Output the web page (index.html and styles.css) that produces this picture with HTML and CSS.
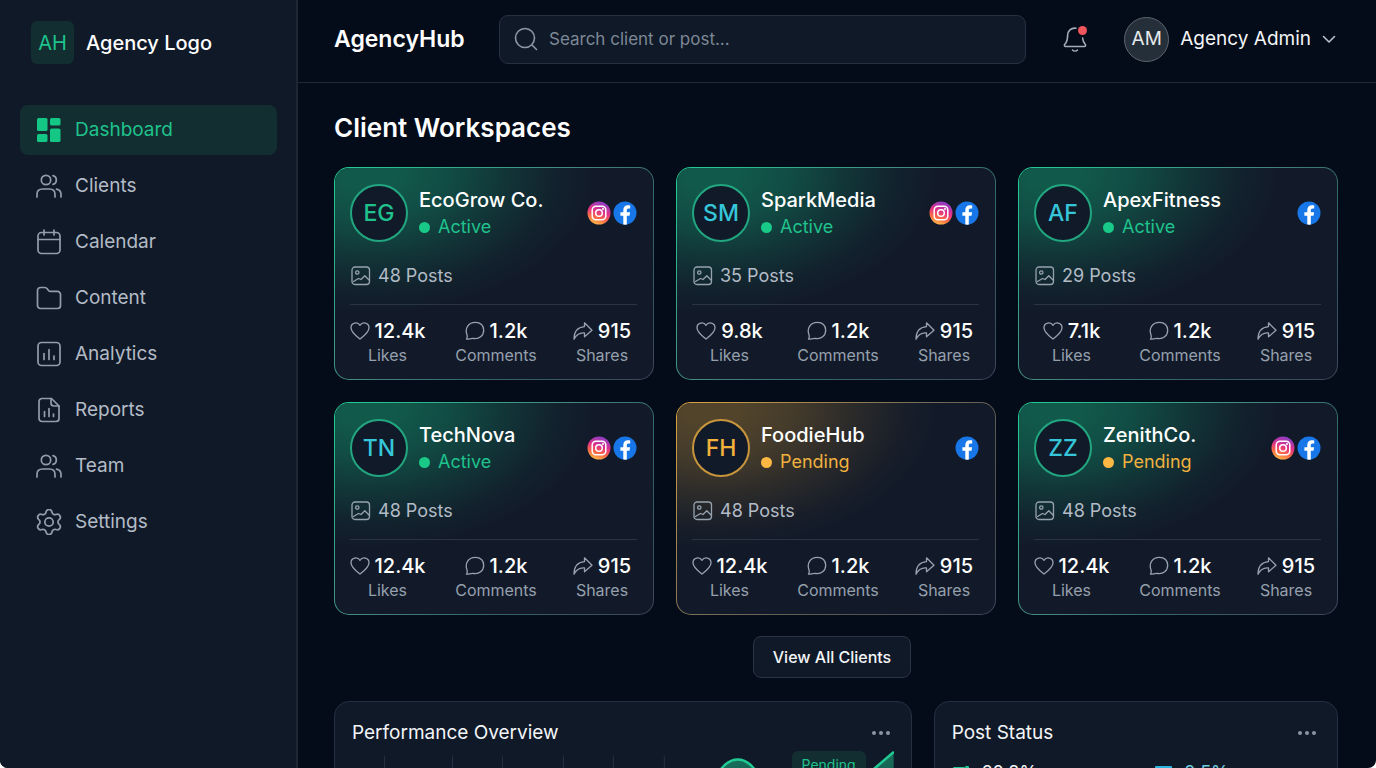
FILE: index.html
```html
<!DOCTYPE html>
<html lang="en">
<head>
<meta charset="utf-8">
<meta name="viewport" content="width=device-width, initial-scale=1">
<title>AgencyHub</title>
<link rel="stylesheet" href="styles.css">
</head>
<body>
<svg class="sprite" aria-hidden="true">
  <defs>
    <linearGradient id="ig" x1="0.25" y1="1" x2="0.6" y2="0">
      <stop offset="0" stop-color="#ffc24a"/><stop offset="0.3" stop-color="#fb6a45"/>
      <stop offset="0.6" stop-color="#e0308a"/><stop offset="1" stop-color="#8a3fc8"/>
    </linearGradient>
    <linearGradient id="area" x1="0" y1="0" x2="0" y2="1">
      <stop offset="0" stop-color="#1fc28c" stop-opacity="0.5"/><stop offset="1" stop-color="#1fc28c" stop-opacity="0.05"/>
    </linearGradient>
  </defs>
  <symbol id="i-dash" viewBox="0 0 26 26"><g fill="#14c784"><rect x="1" y="1" width="10.500" height="13" rx="1.600"/><rect x="14" y="1" width="10.500" height="7.500" rx="1.600"/><rect x="1" y="17" width="10.500" height="8" rx="1.600"/><rect x="14" y="11.500" width="10.500" height="13.500" rx="1.600"/></g></symbol>
  <symbol id="i-users" viewBox="0 0 26 26"><circle cx="10" cy="7" r="4.700"/><path d="M1 24v-2.500c0-3.500 2.300-5.500 5.500-5.500h7c3.200 0 5.500 2 5.500 5.500V24"/><path d="M17 2.600c4.400 1 4.400 7.800 0 8.800"/><path d="M20.500 16.200c2.900.6 4.500 2.500 4.500 5.300V24"/></symbol>
  <symbol id="i-cal" viewBox="0 0 26 26"><rect x="2" y="3.500" width="22" height="21" rx="3.500"/><path d="M2 10.500h22M8 1v5M18 1v5"/></symbol>
  <symbol id="i-folder" viewBox="0 0 26 26"><path d="M1.500 20.500v-15a3 3 0 0 1 3-3h4.300c1 0 1.800.5 2.400 1.300l1.300 1.700c.5.600 1 .9 1.800.9h7.200a3 3 0 0 1 3 3v11.100a3 3 0 0 1-3 3h-17a3 3 0 0 1-3-3z"/></symbol>
  <symbol id="i-chart" viewBox="0 0 26 26"><rect x="2" y="1.500" width="22" height="23" rx="3.500"/><path d="M8 12.500v6M13 8.500v10M18 15v3.500"/></symbol>
  <symbol id="i-report" viewBox="0 0 26 26"><path d="M3 21.500v-17a3 3 0 0 1 3-3h9.500l7.500 7.500v12.500a3 3 0 0 1-3 3H6a3 3 0 0 1-3-3z"/><path d="M15 1.500v4.500a3 3 0 0 0 3 3h5M8.500 14.500v5M13 11.500v8M17.500 17v2.500"/></symbol>
  <symbol id="i-gear" viewBox="2 2 20 20"><g stroke-width="1.350"><circle cx="12" cy="12" r="3.200"/><path d="M9.700 3.400c.4-2.700 4.200-2.700 4.600 0 .2 1.500 1.800 2.400 3.200 1.800 2.500-1 4.400 2.300 2.300 4-1.200.9-1.200 2.700 0 3.600 2.100 1.700.2 5-2.300 4-1.400-.6-3 .3-3.200 1.800-.4 2.700-4.200 2.700-4.600 0-.2-1.500-1.800-2.400-3.200-1.800-2.500 1-4.400-2.300-2.300-4 1.200-.9 1.200-2.700 0-3.600-2.100-1.700-.2-5 2.300-4 1.400.6 3-.3 3.200-1.800z" transform="translate(0 1)"/></g></symbol>
  <symbol id="i-search" viewBox="0 0 24 24"><circle cx="11" cy="11" r="9.500"/><path d="m18 18 4.500 4.500"/></symbol>
  <symbol id="i-bell" viewBox="0 0 24 26"><path d="M13 2.200C8 1.500 4.600 4.800 4.600 9.500c0 5-1 7-2.800 8.800-.8.900-.3 2.200.8 2.200h18.800c1.100 0 1.600-1.300.8-2.200-1.400-1.500-2.300-3-2.600-6.300"/><path d="M9.500 24c1.300 1.300 3.700 1.300 5 0"/></symbol>
  <symbol id="i-down" viewBox="0 0 14 14"><path d="m1.500 4.500 5.500 5.500 5.500-5.500"/></symbol>
  <symbol id="i-image" viewBox="0 0 20 20"><rect x="1" y="1" width="17.500" height="17.500" rx="3"/><circle cx="6.300" cy="6.500" r="1.700"/><path d="m2.500 15.500 5-3 2.500 1 3.800-3.800 4.200 4.300"/></symbol>
  <symbol id="i-heart" viewBox="0 0 20 20"><path d="M10 18C6.500 15.200 1 11.300 1 6.700 1 1.800 7.500.2 10 4.300 12.500.2 19 1.800 19 6.700c0 4.600-5.500 8.500-9 11.300z"/></symbol>
  <symbol id="i-comment" viewBox="0 0 20 20"><path d="M1.500 18.200c.8-1.300 1-2.600.5-4.200C-.5 7 3.500 1.300 10.500 1.300c5 0 8.200 3.400 8.200 7.900 0 5.600-4.700 9.300-10.200 8.300-2.400-.4-4.200.7-7 .7z"/></symbol>
  <symbol id="i-share" viewBox="0 0 20 20"><path d="M11.500 1.800 19 9.300l-7.500 6.500v-3.900C6.800 11.400 3.300 13.500 1 18.200 1 10.800 4.700 6.200 11.500 5.600z"/></symbol>
  <symbol id="i-ig" viewBox="0 0 24 24"><circle cx="12" cy="12" r="11.500" fill="url(#ig)"/><g fill="none" stroke="#fff" stroke-width="1.500"><rect x="5.200" y="5.200" width="13.600" height="13.600" rx="3.800"/><circle cx="12" cy="12" r="3.300"/></g><circle cx="16" cy="8" r="1" fill="#fff"/></symbol>
  <symbol id="i-fb" viewBox="0 0 24 24"><circle cx="12" cy="12" r="11.500" fill="#1877e8"/><path d="M10.300 23.500v-8.700H7.400v-3.500h2.900V9c0-3.100 1.800-4.700 4.500-4.700.9 0 1.800.1 2.400.2v3h-1.500c-1.500 0-1.900.9-1.900 1.800v2h3.300l-.6 3.500h-2.700v8.600c-1.100.3-2.300.3-3.500.1z" fill="#fff"/></symbol>
  <symbol id="i-dots" viewBox="0 0 20 6"><g fill="#8b95a3"><circle cx="3" cy="3" r="2"/><circle cx="10" cy="3" r="2"/><circle cx="17" cy="3" r="2"/></g></symbol>
</svg>

<div class="app">
  <aside class="sidebar">
    <div class="brand"><span class="brand-mark">AH</span><span class="brand-name">Agency Logo</span></div>
    <nav class="nav" aria-label="Main">
      <a class="nav-link active" href="#dashboard" aria-current="page"><svg class="icon"><use href="#i-dash"/></svg>Dashboard</a>
      <a class="nav-link" href="#clients"><svg class="icon"><use href="#i-users"/></svg>Clients</a>
      <a class="nav-link" href="#calendar"><svg class="icon"><use href="#i-cal"/></svg>Calendar</a>
      <a class="nav-link" href="#content"><svg class="icon"><use href="#i-folder"/></svg>Content</a>
      <a class="nav-link" href="#analytics"><svg class="icon"><use href="#i-chart"/></svg>Analytics</a>
      <a class="nav-link" href="#reports"><svg class="icon"><use href="#i-report"/></svg>Reports</a>
      <a class="nav-link" href="#team"><svg class="icon"><use href="#i-users"/></svg>Team</a>
      <a class="nav-link" href="#settings"><svg class="icon"><use href="#i-gear"/></svg>Settings</a>
    </nav>
  </aside>

  <div class="page">
    <header class="topbar">
      <div class="product">AgencyHub</div>
      <label class="search"><svg class="search-icon"><use href="#i-search"/></svg><input class="search-input" type="search" aria-label="Search client or post" placeholder="Search client or post..."></label>
      <button class="bell" type="button" aria-label="Notifications"><svg class="bell-icon"><use href="#i-bell"/></svg><span class="bell-dot"></span></button>
      <button class="account" type="button"><span class="account-avatar">AM</span><span>Agency Admin</span><svg class="chevron"><use href="#i-down"/></svg></button>
    </header>

    <main class="content">
      <h1 class="title">Client Workspaces</h1>
      <section class="cards" aria-label="Clients">
        <article class="card">
          <div class="card-head"><span class="avatar green">EG</span><div class="who"><h2 class="name">EcoGrow Co.</h2><p class="status">Active</p></div><div class="social"><svg class="net"><use href="#i-ig"/></svg><svg class="net"><use href="#i-fb"/></svg></div></div>
          <p class="posts"><svg class="small-icon"><use href="#i-image"/></svg>48 Posts</p>
          <dl class="stats">
            <div class="stat"><dd class="value"><svg class="small-icon"><use href="#i-heart"/></svg>12.4k</dd><dt class="label">Likes</dt></div>
            <div class="stat"><dd class="value"><svg class="small-icon"><use href="#i-comment"/></svg>1.2k</dd><dt class="label">Comments</dt></div>
            <div class="stat"><dd class="value"><svg class="small-icon"><use href="#i-share"/></svg>915</dd><dt class="label">Shares</dt></div>
          </dl>
        </article>
        <article class="card">
          <div class="card-head"><span class="avatar">SM</span><div class="who"><h2 class="name">SparkMedia</h2><p class="status">Active</p></div><div class="social"><svg class="net"><use href="#i-ig"/></svg><svg class="net"><use href="#i-fb"/></svg></div></div>
          <p class="posts"><svg class="small-icon"><use href="#i-image"/></svg>35 Posts</p>
          <dl class="stats">
            <div class="stat"><dd class="value"><svg class="small-icon"><use href="#i-heart"/></svg>9.8k</dd><dt class="label">Likes</dt></div>
            <div class="stat"><dd class="value"><svg class="small-icon"><use href="#i-comment"/></svg>1.2k</dd><dt class="label">Comments</dt></div>
            <div class="stat"><dd class="value"><svg class="small-icon"><use href="#i-share"/></svg>915</dd><dt class="label">Shares</dt></div>
          </dl>
        </article>
        <article class="card">
          <div class="card-head"><span class="avatar">AF</span><div class="who"><h2 class="name">ApexFitness</h2><p class="status">Active</p></div><div class="social"><svg class="net"><use href="#i-fb"/></svg></div></div>
          <p class="posts"><svg class="small-icon"><use href="#i-image"/></svg>29 Posts</p>
          <dl class="stats">
            <div class="stat"><dd class="value"><svg class="small-icon"><use href="#i-heart"/></svg>7.1k</dd><dt class="label">Likes</dt></div>
            <div class="stat"><dd class="value"><svg class="small-icon"><use href="#i-comment"/></svg>1.2k</dd><dt class="label">Comments</dt></div>
            <div class="stat"><dd class="value"><svg class="small-icon"><use href="#i-share"/></svg>915</dd><dt class="label">Shares</dt></div>
          </dl>
        </article>
        <article class="card">
          <div class="card-head"><span class="avatar">TN</span><div class="who"><h2 class="name">TechNova</h2><p class="status">Active</p></div><div class="social"><svg class="net"><use href="#i-ig"/></svg><svg class="net"><use href="#i-fb"/></svg></div></div>
          <p class="posts"><svg class="small-icon"><use href="#i-image"/></svg>48 Posts</p>
          <dl class="stats">
            <div class="stat"><dd class="value"><svg class="small-icon"><use href="#i-heart"/></svg>12.4k</dd><dt class="label">Likes</dt></div>
            <div class="stat"><dd class="value"><svg class="small-icon"><use href="#i-comment"/></svg>1.2k</dd><dt class="label">Comments</dt></div>
            <div class="stat"><dd class="value"><svg class="small-icon"><use href="#i-share"/></svg>915</dd><dt class="label">Shares</dt></div>
          </dl>
        </article>
        <article class="card amber-card">
          <div class="card-head"><span class="avatar amber">FH</span><div class="who"><h2 class="name">FoodieHub</h2><p class="status pending">Pending</p></div><div class="social"><svg class="net"><use href="#i-fb"/></svg></div></div>
          <p class="posts"><svg class="small-icon"><use href="#i-image"/></svg>48 Posts</p>
          <dl class="stats">
            <div class="stat"><dd class="value"><svg class="small-icon"><use href="#i-heart"/></svg>12.4k</dd><dt class="label">Likes</dt></div>
            <div class="stat"><dd class="value"><svg class="small-icon"><use href="#i-comment"/></svg>1.2k</dd><dt class="label">Comments</dt></div>
            <div class="stat"><dd class="value"><svg class="small-icon"><use href="#i-share"/></svg>915</dd><dt class="label">Shares</dt></div>
          </dl>
        </article>
        <article class="card">
          <div class="card-head"><span class="avatar">ZZ</span><div class="who"><h2 class="name">ZenithCo.</h2><p class="status pending">Pending</p></div><div class="social"><svg class="net"><use href="#i-ig"/></svg><svg class="net"><use href="#i-fb"/></svg></div></div>
          <p class="posts"><svg class="small-icon"><use href="#i-image"/></svg>48 Posts</p>
          <dl class="stats">
            <div class="stat"><dd class="value"><svg class="small-icon"><use href="#i-heart"/></svg>12.4k</dd><dt class="label">Likes</dt></div>
            <div class="stat"><dd class="value"><svg class="small-icon"><use href="#i-comment"/></svg>1.2k</dd><dt class="label">Comments</dt></div>
            <div class="stat"><dd class="value"><svg class="small-icon"><use href="#i-share"/></svg>915</dd><dt class="label">Shares</dt></div>
          </dl>
        </article>
      </section>

      <div class="cards-footer"><button class="view-all" type="button">View All Clients</button></div>

      <div class="panels">
        <section class="panel">
          <div class="panel-head"><h2 class="panel-title">Performance Overview</h2><button class="more" type="button" aria-label="Performance options"><svg class="dots"><use href="#i-dots"/></svg></button></div>
          <div class="chart">
            <svg class="chart-plot" viewBox="0 0 542 160" preserveAspectRatio="none">
              <path d="M32.500 6v154M100.500 6v154M150.500 6v154M211.500 6v154M261.500 6v154M312.500 6v154" stroke="#263141"/>
              <path d="M356 38C369 18 375 9.500 386 9.500S403 18 416 38v122h-60z" fill="url(#area)"/>
              <path d="M356 38C369 18 375 9.500 386 9.500S403 18 416 38" stroke="#21c993" stroke-width="2.500"/>
              <path d="m500 38 42-36v158h-42z" fill="url(#area)"/>
              <path d="m500 38 41.500-35.500" stroke="#21c993" stroke-width="2.500"/>
            </svg>
            <span class="chart-tag">Pending</span>
          </div>
        </section>
        <section class="panel">
          <div class="panel-head"><h2 class="panel-title">Post Status</h2><button class="more" type="button" aria-label="Post status options"><svg class="dots"><use href="#i-dots"/></svg></button></div>
          <div class="metrics">
            <div class="metric"><svg class="metric-icon" viewBox="0 0 18 18"><path d="M3 4h9M14 3h2v13M2 4v12h14" stroke="#21c993" stroke-width="2"/></svg>20.8%</div>
            <div class="metric cyan"><svg class="metric-icon" viewBox="0 0 18 18"><rect x="2" y="3" width="15" height="13" stroke="#2db5e0" stroke-width="2"/></svg>2.5%</div>
          </div>
        </section>
      </div>
    </main>
  </div>
</div>
</body>
</html>
```
FILE: styles.css
```css
* { box-sizing: border-box; }
body { margin: 0; background: #fff; color: #f3f5f7; font-family: Inter, "Liberation Sans", sans-serif; font-size: 18px; line-height: 24px; }
h1, h2, p, dl, dd, dt { margin: 0; font-weight: 400; }
button { margin: 0; padding: 0; border: 0; background: none; color: inherit; font: inherit; cursor: pointer; }
svg { display: block; flex: none; fill: none; stroke-linecap: round; stroke-linejoin: round; }
.sprite { position: absolute; width: 0; height: 0; }

.app { display: grid; grid-template-columns: 298px minmax(0, 1fr); height: 100vh; overflow: hidden; background: #040c1a; border-radius: 0 0 8px 8px; }

.sidebar { padding: 21px 19px 21px 20px; background: #101928; border-right: 2px solid #1c2634; }
.brand { display: flex; align-items: center; gap: 12px; padding-left: 11px; font-size: 20px; }
.brand-mark { display: grid; place-items: center; width: 43px; height: 43px; border-radius: 6px; background: #122e31; color: #1fc28c; }
.brand-name { font-weight: 500; color: #fff; }
.nav { display: flex; flex-direction: column; gap: 6px; margin-top: 41px; }
.nav-link { display: flex; align-items: center; gap: 13px; height: 50px; padding-left: 16px; border-radius: 8px; color: #b3bbc6; font-size: 19px; line-height: 26px; text-decoration: none; }
.nav-link.active { background: #122e31; color: #1fc28c; }
.icon { width: 26px; height: 26px; stroke: #929daa; stroke-width: 1.700; }
.active .icon { stroke: none; }

.page { min-width: 0; }
.topbar { display: flex; align-items: center; height: 83px; padding: 0 40px 4px 36px; border-bottom: 1px solid #202a37; }
.product { flex: none; width: 165px; font-size: 23px; font-weight: 600; color: #fff; }
.search { display: flex; flex: 1; align-items: center; gap: 11px; height: 49px; padding: 0 14px; border: 1px solid #253040; border-radius: 9px; background: #101928; }
.search-icon { width: 24px; height: 24px; stroke: #8c97a5; stroke-width: 1.600; }
.search-input { flex: 1; min-width: 0; padding: 0; border: 0; outline: 0; background: none; color: #f3f5f7; font: inherit; font-size: 17px; }
.search-input::placeholder { color: #7d8896; opacity: 1; }
.bell { position: relative; margin: 0 37px; }
.bell-icon { width: 24px; height: 26px; stroke: #a3acb8; stroke-width: 1.600; }
.bell-dot { position: absolute; top: 0; right: 0; width: 9px; height: 9px; border-radius: 50%; background: #f0565c; }
.account { display: flex; align-items: center; gap: 11px; font-size: 19px; line-height: 26px; color: #f3f5f7; }
.account-avatar { display: grid; place-items: center; width: 45px; height: 45px; border: 1px solid #5b656f; border-radius: 50%; background: #252f3a; color: #e6e9ec; }
.chevron { width: 14px; height: 14px; stroke: #b9c0c9; stroke-width: 1.600; }

.content { padding: 28px 38px 28px 36px; }
.title { font-size: 26px; font-weight: 600; line-height: 34px; color: #fff; }
.cards { display: grid; grid-template-columns: repeat(3, minmax(0, 1fr)); gap: 22px; margin-top: 22px; }
.card { padding: 16px 16px 12px 15px; border: 1px solid transparent; border-radius: 15px;
  background: radial-gradient(ellipse 225px 140px at 35px 5px, #11594b 0%, #11594b 12%, rgba(17, 89, 75, 0.8) 35%, rgba(17, 89, 75, 0.4) 62%, rgba(17, 89, 75, 0.1) 85%, rgba(17, 89, 75, 0) 100%) padding-box,
    linear-gradient(#121a29, #121a29) padding-box,
    linear-gradient(135deg, #22cf96 0%, #45877f 45%, #34696a 65%, #3b4557 100%) border-box; }
.amber-card {
  background: radial-gradient(ellipse 225px 140px at 35px 5px, #52442b 0%, #52442b 12%, rgba(82, 68, 43, 0.8) 35%, rgba(82, 68, 43, 0.4) 62%, rgba(82, 68, 43, 0.1) 85%, rgba(82, 68, 43, 0) 100%) padding-box,
    linear-gradient(#121a29, #121a29) padding-box,
    linear-gradient(135deg, #e0a640 0%, #776e58 45%, #5c5b51 65%, #3b4557 100%) border-box; }
.card-head { display: flex; align-items: center; gap: 11px; }
.avatar { display: grid; flex: none; place-items: center; width: 58px; height: 58px; border: 2px solid #22a67f; border-radius: 50%; background: #101a29; color: #36c6d9; font-size: 23px; font-weight: 500; }
.avatar.green { color: #1fc28c; }
.avatar.amber { border-color: #c8953c; color: #f3b13c; }
.who { flex: 1; min-width: 0; }
.name { font-size: 20px; font-weight: 500; line-height: 28px; color: #fff; }
.status { display: flex; align-items: center; gap: 8px; line-height: 26px; color: #1fc28c; }
.status::before { content: ""; width: 11px; height: 11px; border-radius: 50%; background: #19c987; }
.status.pending { color: #f0b13f; }
.status.pending::before { background: #fdb843; }
.social { display: flex; gap: 2px; }
.net { width: 24px; height: 24px; }
.posts { display: flex; align-items: center; gap: 7px; margin-top: 22px; padding-left: 1px; color: #b3bbc6; }
.small-icon { width: 20px; height: 20px; stroke: #97a2af; stroke-width: 1.300; }
.stats { display: grid; grid-template-columns: 75px minmax(0, 1fr) 70px; margin-top: 16px; padding-top: 14px; border-top: 1px solid #2a3544; }
.stat { display: flex; flex-direction: column; align-items: center; }
.value { display: flex; align-items: center; gap: 5px; font-size: 20px; font-weight: 500; color: #fff; }
.label { font-size: 16px; color: #96a0ad; }

.cards-footer { display: flex; justify-content: center; margin-top: 21px; padding-right: 8px; }
.view-all { height: 42px; padding: 0 19px; border: 1px solid #2a3443; border-radius: 8px; background: #101928; font-size: 16px; font-weight: 500; }

.panels { display: grid; grid-template-columns: 10fr 7fr; gap: 22px; margin-top: 23px; }
.panel { padding: 17px; border: 1px solid #243040; border-radius: 15px; background: #101928; }
.panel-head { display: flex; align-items: center; justify-content: space-between; height: 28px; }
.panel-title { font-size: 19px; }
.more { padding: 6px 3px; }
.dots { width: 20px; height: 6px; }
.chart { position: relative; margin-top: 3px; }
.chart-plot { width: 100%; height: 160px; }
.chart-tag { position: absolute; top: 1px; right: 28px; padding: 2px 10px; border-radius: 6px; background: #122e31; color: #1fc28c; font-size: 14px; }
.metrics { display: grid; grid-template-columns: 11fr 9fr; margin-top: 14px; }
.metric { display: flex; align-items: center; gap: 12px; font-size: 18px; }
.metric.cyan { color: #6fcbe0; }
.metric-icon { width: 18px; height: 18px; }
```
